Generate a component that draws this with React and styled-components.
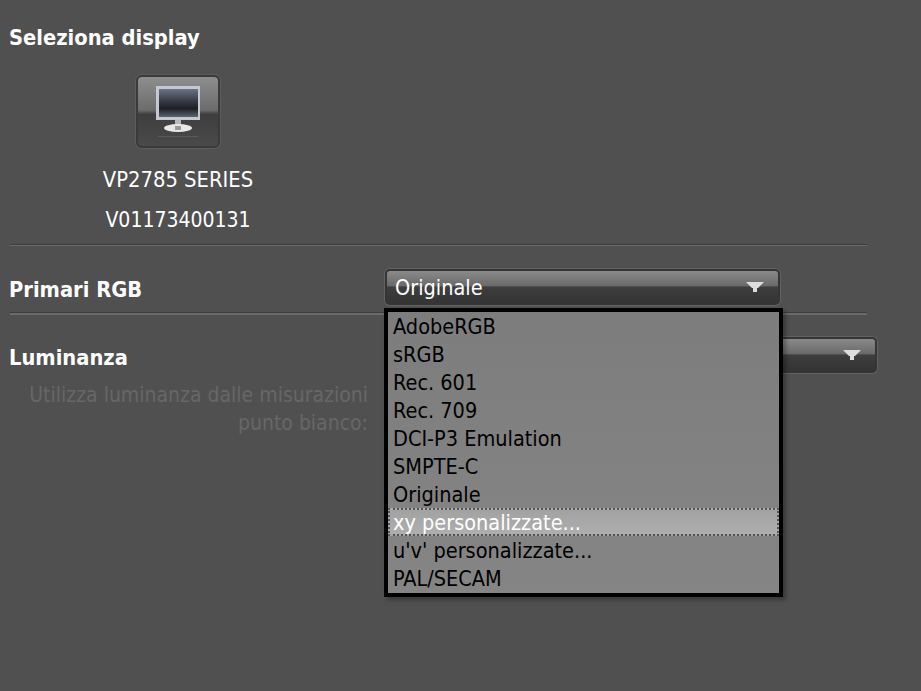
import React from "react";
import styled, { createGlobalStyle } from "styled-components";

const GlobalStyle = createGlobalStyle`
  html, body {
    margin: 0;
    padding: 0;
    background: #505050;
  }
  body {
    font-family: "DejaVu Sans Condensed", "DejaVu Sans", sans-serif;
  }
`;

const PRIMARIES = [
  "AdobeRGB",
  "sRGB",
  "Rec. 601",
  "Rec. 709",
  "DCI-P3 Emulation",
  "SMPTE-C",
  "Originale",
  "xy personalizzate...",
  "u'v' personalizzate...",
  "PAL/SECAM",
];

const Page = styled.div`
  width: 921px;
  height: 691px;
  overflow: hidden;
  background: #505050;
  padding: 25px 0 0 10px;
  box-sizing: border-box;
  position: relative;
`;
const Heading = styled.div`
  font-size: 21.7px;
  font-weight: bold;
  line-height: 26px;
  color: #fff;
  margin-left: -1px;
  padding-top: ${(p) => p.$drop || 0}px;
`;
const DisplayBlock = styled.div`
  width: 336px;
  display: flex;
  flex-direction: column;
  align-items: center;
  margin-top: 24px;
`;
const DisplayButton = styled.div`
  width: 84px;
  height: 73px;
  box-sizing: border-box;
  border: 2px solid #3a3a3a;
  border-radius: 6px;
  box-shadow: 0 0 0 1px #5c5c5c;
  background: linear-gradient(
    to bottom,
    #8e8e8e 0%,
    #6c6c6c 48%,
    #3e3e3e 54%,
    #4a4a4a 100%
  );
  display: flex;
  align-items: center;
  justify-content: center;
`;
const DisplayText = styled.div`
  font-size: ${(p) => p.$size}px;
  line-height: 40px;
  color: #fff;
`;
const DisplayName = styled(DisplayText)`
  margin-top: 12px;
`;
const Divider = styled.div`
  width: 857px;
  height: ${(p) => p.$height}px;
  background: linear-gradient(to bottom, #3d3d3d 1px, #6a6a6a 1px);
  margin-top: ${(p) => p.$top}px;
`;
const Row = styled.div`
  display: flex;
  align-items: center;
  justify-content: space-between;
  width: ${(p) => p.$width}px;
  height: 36px;
  margin-top: ${(p) => p.$top}px;
`;
const Select = styled.div`
  width: ${(p) => p.$width}px;
  height: 36px;
  box-sizing: border-box;
  border: 2px solid #353535;
  border-radius: 5px;
  box-shadow: 0 0 0 1px #626262;
  background: linear-gradient(
    to bottom,
    #8a8a8a 0%,
    #6a6a6a 46%,
    #3e3e3e 50%,
    #343434 100%
  );
  display: flex;
  align-items: center;
  justify-content: space-between;
  padding: 0 14px 0 8px;
  font-size: 21.5px;
  color: #fff;
`;
const ArrowIcon = styled.svg`
  width: 18px;
  height: 10px;
  fill: #ddd;
`;
const HintText = styled.div`
  width: 358px;
  margin-top: 8px;
  text-align: right;
  font-size: 21px;
  line-height: 28px;
  color: #676767;
`;
const DropdownList = styled.div`
  position: absolute;
  left: 384px;
  top: 308px;
  width: 399px;
  height: 289px;
  box-sizing: border-box;
  border: 4px solid #000;
  background: linear-gradient(to bottom, #7d7d7d, #858585);
  box-shadow: 3px 3px 4px rgba(0, 0, 0, 0.3);
`;
const Option = styled.div`
  height: 28px;
  line-height: 30px;
  box-sizing: border-box;
  padding-left: 5px;
  font-size: 21.5px;
  color: ${(p) => (p.$active ? "#fff" : "#000")};
  ${(p) =>
    p.$active &&
    `
    line-height: 26px;
    padding-left: 3px;
    background: linear-gradient(to bottom, #a2a2a2, #aeaeae);
    border: 2px dotted #555;
  `}
`;
const MonitorSvg = styled.svg`
  width: 56px;
  height: 56px;
  filter: blur(0.5px);
`;

const Arrow = () => (
  <ArrowIcon viewBox="0 0 18 10">
    <path d="M0 0h18l-6 6h-1v4H7V6H6z" />
  </ArrowIcon>
);

const MonitorIcon = () => (
  <MonitorSvg viewBox="0 0 56 56">
    <defs>
      <linearGradient id="screen" x1="0" y1="0" x2="0" y2="1">
        <stop offset="0" stopColor="#6a7485" />
        <stop offset="0.45" stopColor="#343842" />
        <stop offset="0.7" stopColor="#1d1f24" />
        <stop offset="1" stopColor="#5c6470" />
      </linearGradient>
    </defs>
    <rect x="6" y="2" width="44" height="34" fill="#c4c8d0" />
    <rect x="9" y="5" width="39" height="28" fill="url(#screen)" />
    <rect x="25" y="36" width="6" height="6" fill="#b8b8b8" />
    <ellipse cx="28" cy="44" rx="14" ry="4" fill="#e8e8e8" />
    <rect x="25" y="42" width="6" height="4" fill="#999" />
    <rect x="8" y="52" width="40" height="1" fill="#5a5a5a" />
  </MonitorSvg>
);

export default function App() {
  return (
    <Page>
      <GlobalStyle />
      <Heading>Seleziona display</Heading>
      <DisplayBlock>
        <DisplayButton>
          <MonitorIcon />
        </DisplayButton>
        <DisplayName $size={21.8}>VP2785 SERIES</DisplayName>
        <DisplayText $size={21}>V01173400131</DisplayText>
      </DisplayBlock>
      <Divider $top={4} $height={2} />
      <Row $width={770} $top={23}>
        <Heading $drop={6}>Primari RGB</Heading>
        <Select $width={395}>
          Originale
          <Arrow />
        </Select>
      </Row>
      <Divider $top={7} $height={3} />
      <Row $width={867} $top={22}>
        <Heading $drop={6}>Luminanza</Heading>
        <Select $width={400}>
          <span />
          <Arrow />
        </Select>
      </Row>
      <HintText>
        Utilizza luminanza dalle misurazioni
        <br />
        punto bianco:
      </HintText>
      <DropdownList>
        {PRIMARIES.map((name, i) => (
          <Option key={name} $active={i === 7}>
            {name}
          </Option>
        ))}
      </DropdownList>
    </Page>
  );
}
